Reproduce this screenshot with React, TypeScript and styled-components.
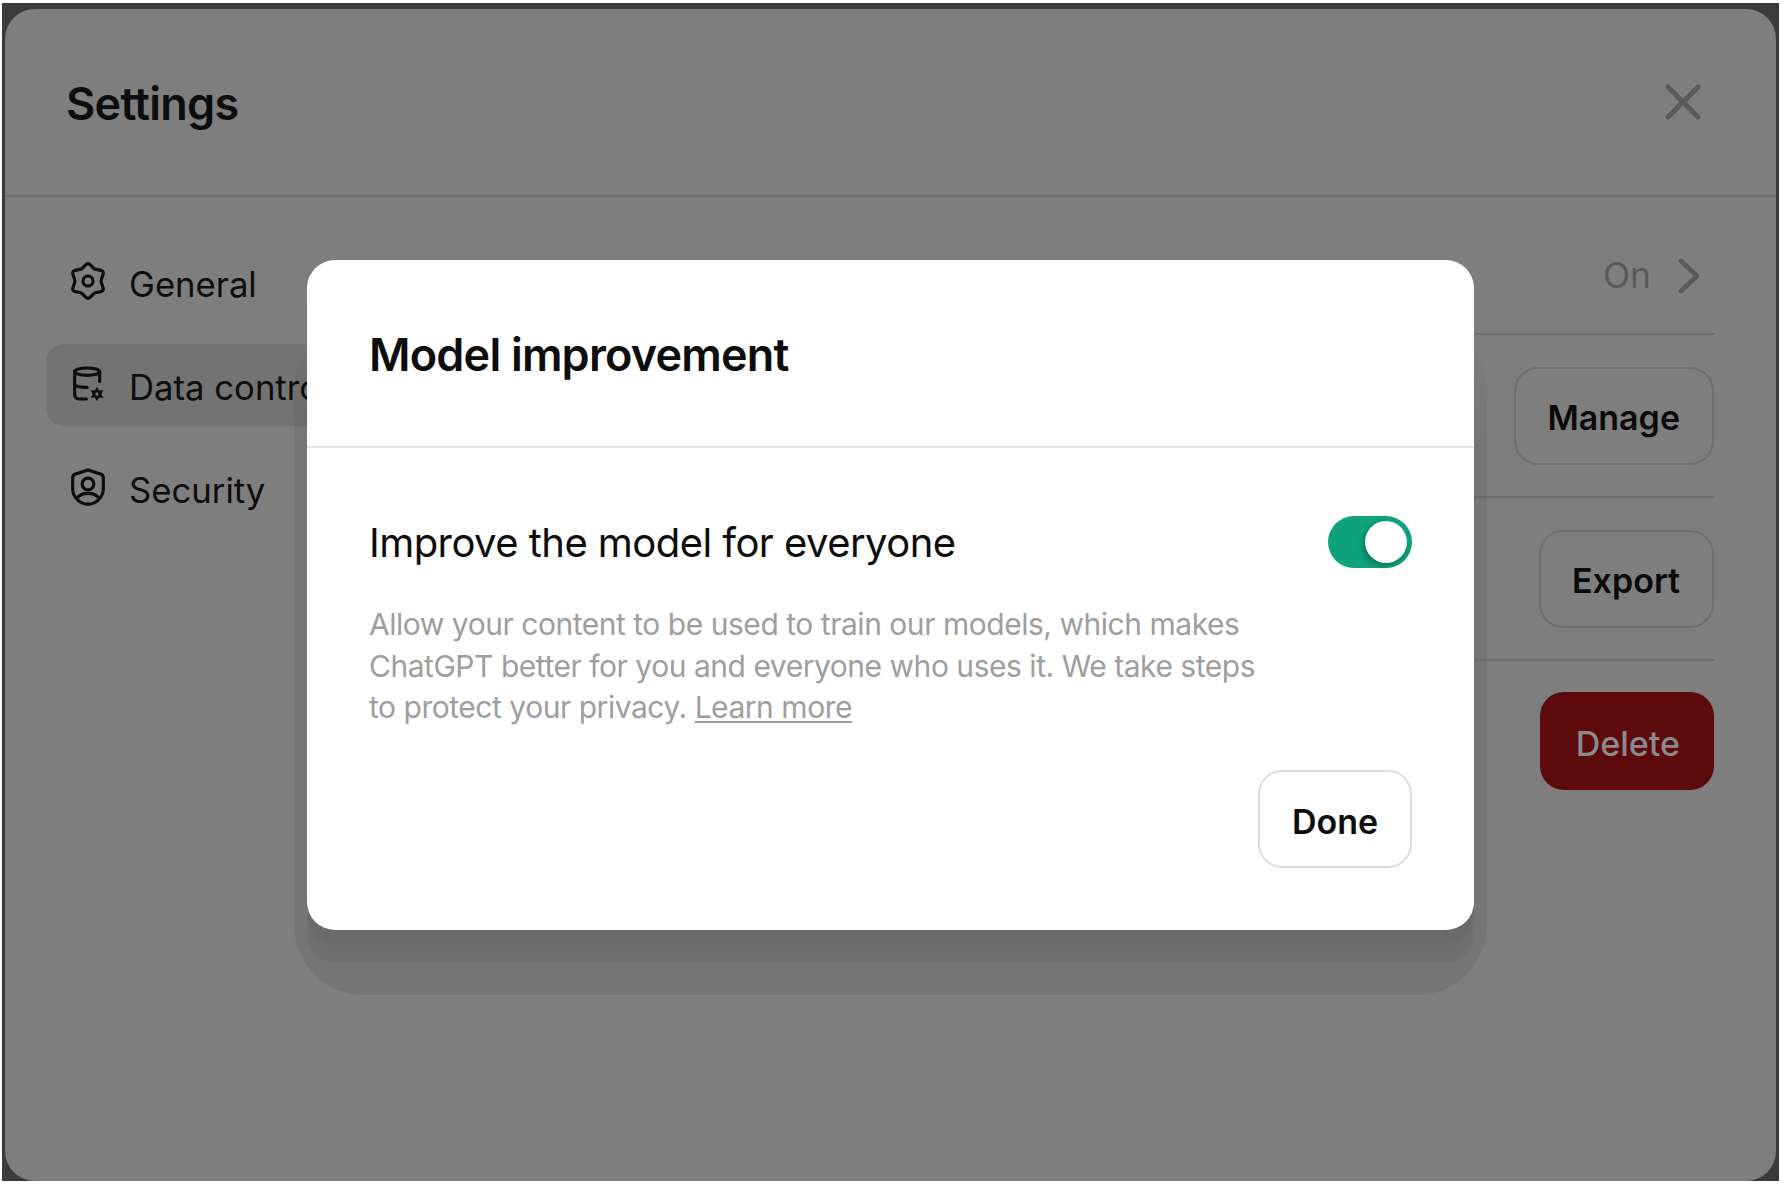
import React from 'react';
import styled, { createGlobalStyle } from 'styled-components';

const GlobalStyle = createGlobalStyle`
  html, body { margin: 0; padding: 0; height: 100%; background: #fff; }
  * { box-sizing: border-box; }
  body { font-family: Inter, "Liberation Sans", sans-serif; }
`;

const Frame = styled.div`
  height: 1184px;
  padding: 3px 1px 3px 2px;
`;

const Backdrop = styled.div`
  height: 100%;
  background: #3b3b3b;
  padding: 6px 3px 0 3px;
`;

const Panel = styled.div`
  position: relative;
  height: 100%;
  background: #7e7e7e;
  border-radius: 30px;
  display: flex;
  flex-direction: column;
  overflow: hidden;
`;

const PanelHeader = styled.header`
  height: 188px;
  flex: none;
  border-bottom: 2px solid #6f6f6f;
  padding: 2px 61px 0;
  display: flex;
  align-items: center;
  justify-content: space-between;
`;

const PanelTitle = styled.h1`
  margin: 0;
  font-size: 45px;
  font-weight: 600;
  letter-spacing: -0.750px;
  color: #0d0d0d;
`;

const CloseIcon = styled.svg`
  width: 40px;
  height: 40px;
  margin: -2px 12px 0 0;
  stroke: #5a5a5a;
  stroke-width: 5;
  stroke-linecap: round;
  fill: none;
`;

const Body = styled.div`
  flex: 1;
  display: flex;
  padding: 44px 62px 0 41px;
`;

const Sidebar = styled.nav`
  width: 420px;
  flex: none;
  display: flex;
  flex-direction: column;
  gap: 21px;
`;

const NavItem = styled.div<{ $active?: boolean }>`
  height: 82px;
  display: flex;
  align-items: center;
  gap: 21px;
  padding-left: 22px;
  border-radius: 18px;
  color: #0d0d0d;
  background: ${p => (p.$active ? '#737373' : 'transparent')};
`;

const NavLabel = styled.span`
  padding-top: 4px;
  font-size: 34.700px;
`;

const NavIcon = styled.svg`
  width: 40px;
  height: 40px;
  flex: none;
  margin-top: -2px;
  fill: none;
  stroke: #0d0d0d;
  stroke-width: 1.900;
  stroke-linecap: round;
  stroke-linejoin: round;
`;

const Rows = styled.div`
  flex: 1;
  display: flex;
  flex-direction: column;
`;

const Row = styled.div<{ $last?: boolean }>`
  display: flex;
  justify-content: flex-end;
  align-items: center;
  height: 163px;
  padding-bottom: ${p => (p.$last ? '4px' : '0')};
  border-bottom: ${p => (p.$last ? 'none' : '2px solid #6f6f6f')};
`;

const ToggleRow = styled(Row)`
  height: 94px;
  padding: 0 14px 23px 0;
  gap: 27px;
`;

const RowValue = styled.span`
  font-size: 35.500px;
  color: #5a5a5a;
`;

const Chevron = styled.svg`
  width: 22px;
  height: 36px;
  fill: none;
  stroke: #5a5a5a;
  stroke-width: 4.500;
  stroke-linecap: round;
  stroke-linejoin: round;
`;

const OutlineButton = styled.div`
  height: 98px;
  padding: 4px 32px 0 31px;
  display: flex;
  align-items: center;
  border: 2px solid #6f6f6f;
  border-radius: 24px;
  font-size: 34px;
  font-weight: 600;
  color: #0a0a0a;
`;

const DangerButton = styled(OutlineButton)`
  border: none;
  background: #5c0a0c;
  color: #8b8b8b;
  padding: 6px 34px 0 36px;
  font-weight: 500;
`;

const Overlay = styled.div`
  position: absolute;
  inset: 0;
  z-index: 0;
  display: flex;
  justify-content: center;
  align-items: flex-start;
  padding-top: 251px;
`;

const Modal = styled.div`
  position: relative;
  width: 1167px;
  height: 670px;
  flex: none;
  background: #fff;
  border-radius: 28px;
  display: flex;
  flex-direction: column;
  box-shadow:
    0 15px 3px -1px rgba(0, 0, 0, 0.045),
    0 33px 2px 0 rgba(0, 0, 0, 0.045);

  &::before {
    content: '';
    position: absolute;
    z-index: -1;
    top: 60px;
    left: -13px;
    right: -13px;
    bottom: -65px;
    border-radius: 70px;
    background: linear-gradient(to bottom, transparent 0, rgba(0, 0, 0, 0.07) 120px);
  }
`;

const ModalHeader = styled.div`
  height: 188px;
  flex: none;
  border-bottom: 2px solid #e3e3e3;
  padding: 3px 62px 0;
  display: flex;
  align-items: center;
`;

const ModalTitle = styled.h2`
  margin: 0;
  font-size: 45px;
  font-weight: 600;
  letter-spacing: -0.800px;
  color: #0d0d0d;
`;

const ModalBody = styled.div`
  flex: 1;
  padding: 68px 62px 0;
  display: flex;
  flex-direction: column;
`;

const OptionRow = styled.div`
  display: flex;
  justify-content: space-between;
  align-items: center;
  height: 52px;
`;

const OptionLabel = styled.span`
  font-size: 40px;
  letter-spacing: -0.550px;
  color: #0d0d0d;
`;

const Toggle = styled.div`
  width: 84px;
  height: 52px;
  border-radius: 26px;
  background: #0ea37d;
  display: flex;
  align-items: center;
  justify-content: flex-end;
  padding-right: 5px;
`;

const ToggleKnob = styled.div`
  width: 42px;
  height: 42px;
  border-radius: 50%;
  background: #fff;
  box-shadow: -2px 3px 6px rgba(0, 0, 0, 0.3);
`;

const Description = styled.p`
  margin: 36px 0 0;
  width: 900px;
  font-size: 30px;
  line-height: 41.500px;
  letter-spacing: -0.470px;
  color: #9e9e9e;

  a {
    color: inherit;
    text-decoration: underline;
    text-decoration-thickness: 2px;
    text-underline-offset: 3px;
  }
`;

const ModalFooter = styled.div`
  display: flex;
  justify-content: flex-end;
  margin-top: 41px;
`;

const DoneButton = styled.div`
  width: 154px;
  height: 98px;
  padding-top: 5px;
  display: flex;
  align-items: center;
  justify-content: center;
  border: 2px solid #dcdcdc;
  border-radius: 24px;
  font-size: 34px;
  font-weight: 600;
  color: #0d0d0d;
`;

const GearIcon = () => (
  <NavIcon viewBox="0 0 24 24">
    <path d="M7.900 4.800C9.400 4.200 10.400 1.600 12 1.600S14.600 4.200 16.100 4.800C17.600 5.600 20.200 5 21 6.400S19.700 10.400 19.900 12C19.700 13.600 21.800 16.200 21 17.600S17.600 18.400 16.100 19.200C14.600 19.800 13.600 22.400 12 22.400S9.400 19.800 7.900 19.200C6.400 18.400 3.800 19 3 17.600S4.300 13.600 4.100 12C4.300 10.400 2.200 7.800 3 6.400S6.400 5.600 7.900 4.800Z" />
    <circle cx="12" cy="12" r="3" />
  </NavIcon>
);

const DataIcon = () => (
  <NavIcon viewBox="0 0 24 24">
    <ellipse cx="11.500" cy="4.600" rx="7.500" ry="2.200" />
    <path d="M4 4.600V18.500C4 20.300 5.200 21 7 21H11M19 4.600V10.500M4 12.500C5 13.700 8 14.100 11.500 14" />
    <path fill="#0d0d0d" stroke="none" transform="translate(-.600 1.300)" d="M18 12.500l1.300 2.100 2.500-.1-1.200 2.200 1.200 2.200-2.500-.1-1.300 2.100-1.300-2.100-2.500.1 1.200-2.200-1.200-2.200 2.500.1z" />
    <circle cx="17.400" cy="18" r="1" fill="#737373" stroke="none" />
  </NavIcon>
);

const ShieldIcon = () => (
  <NavIcon viewBox="0 0 24 24">
    <path d="M12 1.800L19.500 4.200C20.600 4.600 21.200 5.400 21.200 6.500V13C21.200 18.500 16.500 22.300 12 22.300S2.800 18.500 2.800 13V6.500C2.800 5.400 3.400 4.600 4.500 4.200Z" />
    <circle cx="12" cy="10.200" r="3.500" />
    <path d="M5.500 18.500C7 16.500 9.500 15.800 12 15.800S17 16.500 18.500 18.500" />
  </NavIcon>
);

export default function App() {
  return (
    <>
      <GlobalStyle />
      <Frame>
        <Backdrop>
          <Panel>
            <PanelHeader>
              <PanelTitle>Settings</PanelTitle>
              <CloseIcon viewBox="0 0 40 40">
                <path d="M5 5L35 35M35 5L5 35" />
              </CloseIcon>
            </PanelHeader>
            <Body>
              <Sidebar>
                <NavItem><GearIcon /><NavLabel>General</NavLabel></NavItem>
                <NavItem $active><DataIcon /><NavLabel>Data controls</NavLabel></NavItem>
                <NavItem><ShieldIcon /><NavLabel>Security</NavLabel></NavItem>
              </Sidebar>
              <Rows>
                <ToggleRow>
                  <RowValue>On</RowValue>
                  <Chevron viewBox="0 0 22 36"><path d="M3 3L19 18L3 33" /></Chevron>
                </ToggleRow>
                <Row><OutlineButton>Manage</OutlineButton></Row>
                <Row><OutlineButton>Export</OutlineButton></Row>
                <Row $last><DangerButton>Delete</DangerButton></Row>
              </Rows>
            </Body>
            <Overlay>
              <Modal>
                <ModalHeader>
                  <ModalTitle>Model improvement</ModalTitle>
                </ModalHeader>
                <ModalBody>
                  <OptionRow>
                    <OptionLabel>Improve the model for everyone</OptionLabel>
                    <Toggle><ToggleKnob /></Toggle>
                  </OptionRow>
                  <Description>
                    Allow your content to be used to train our models, which makes ChatGPT better for you and everyone who uses it. We take steps to protect your privacy. <a>Learn more</a>
                  </Description>
                  <ModalFooter>
                    <DoneButton>Done</DoneButton>
                  </ModalFooter>
                </ModalBody>
              </Modal>
            </Overlay>
          </Panel>
        </Backdrop>
      </Frame>
    </>
  );
}
